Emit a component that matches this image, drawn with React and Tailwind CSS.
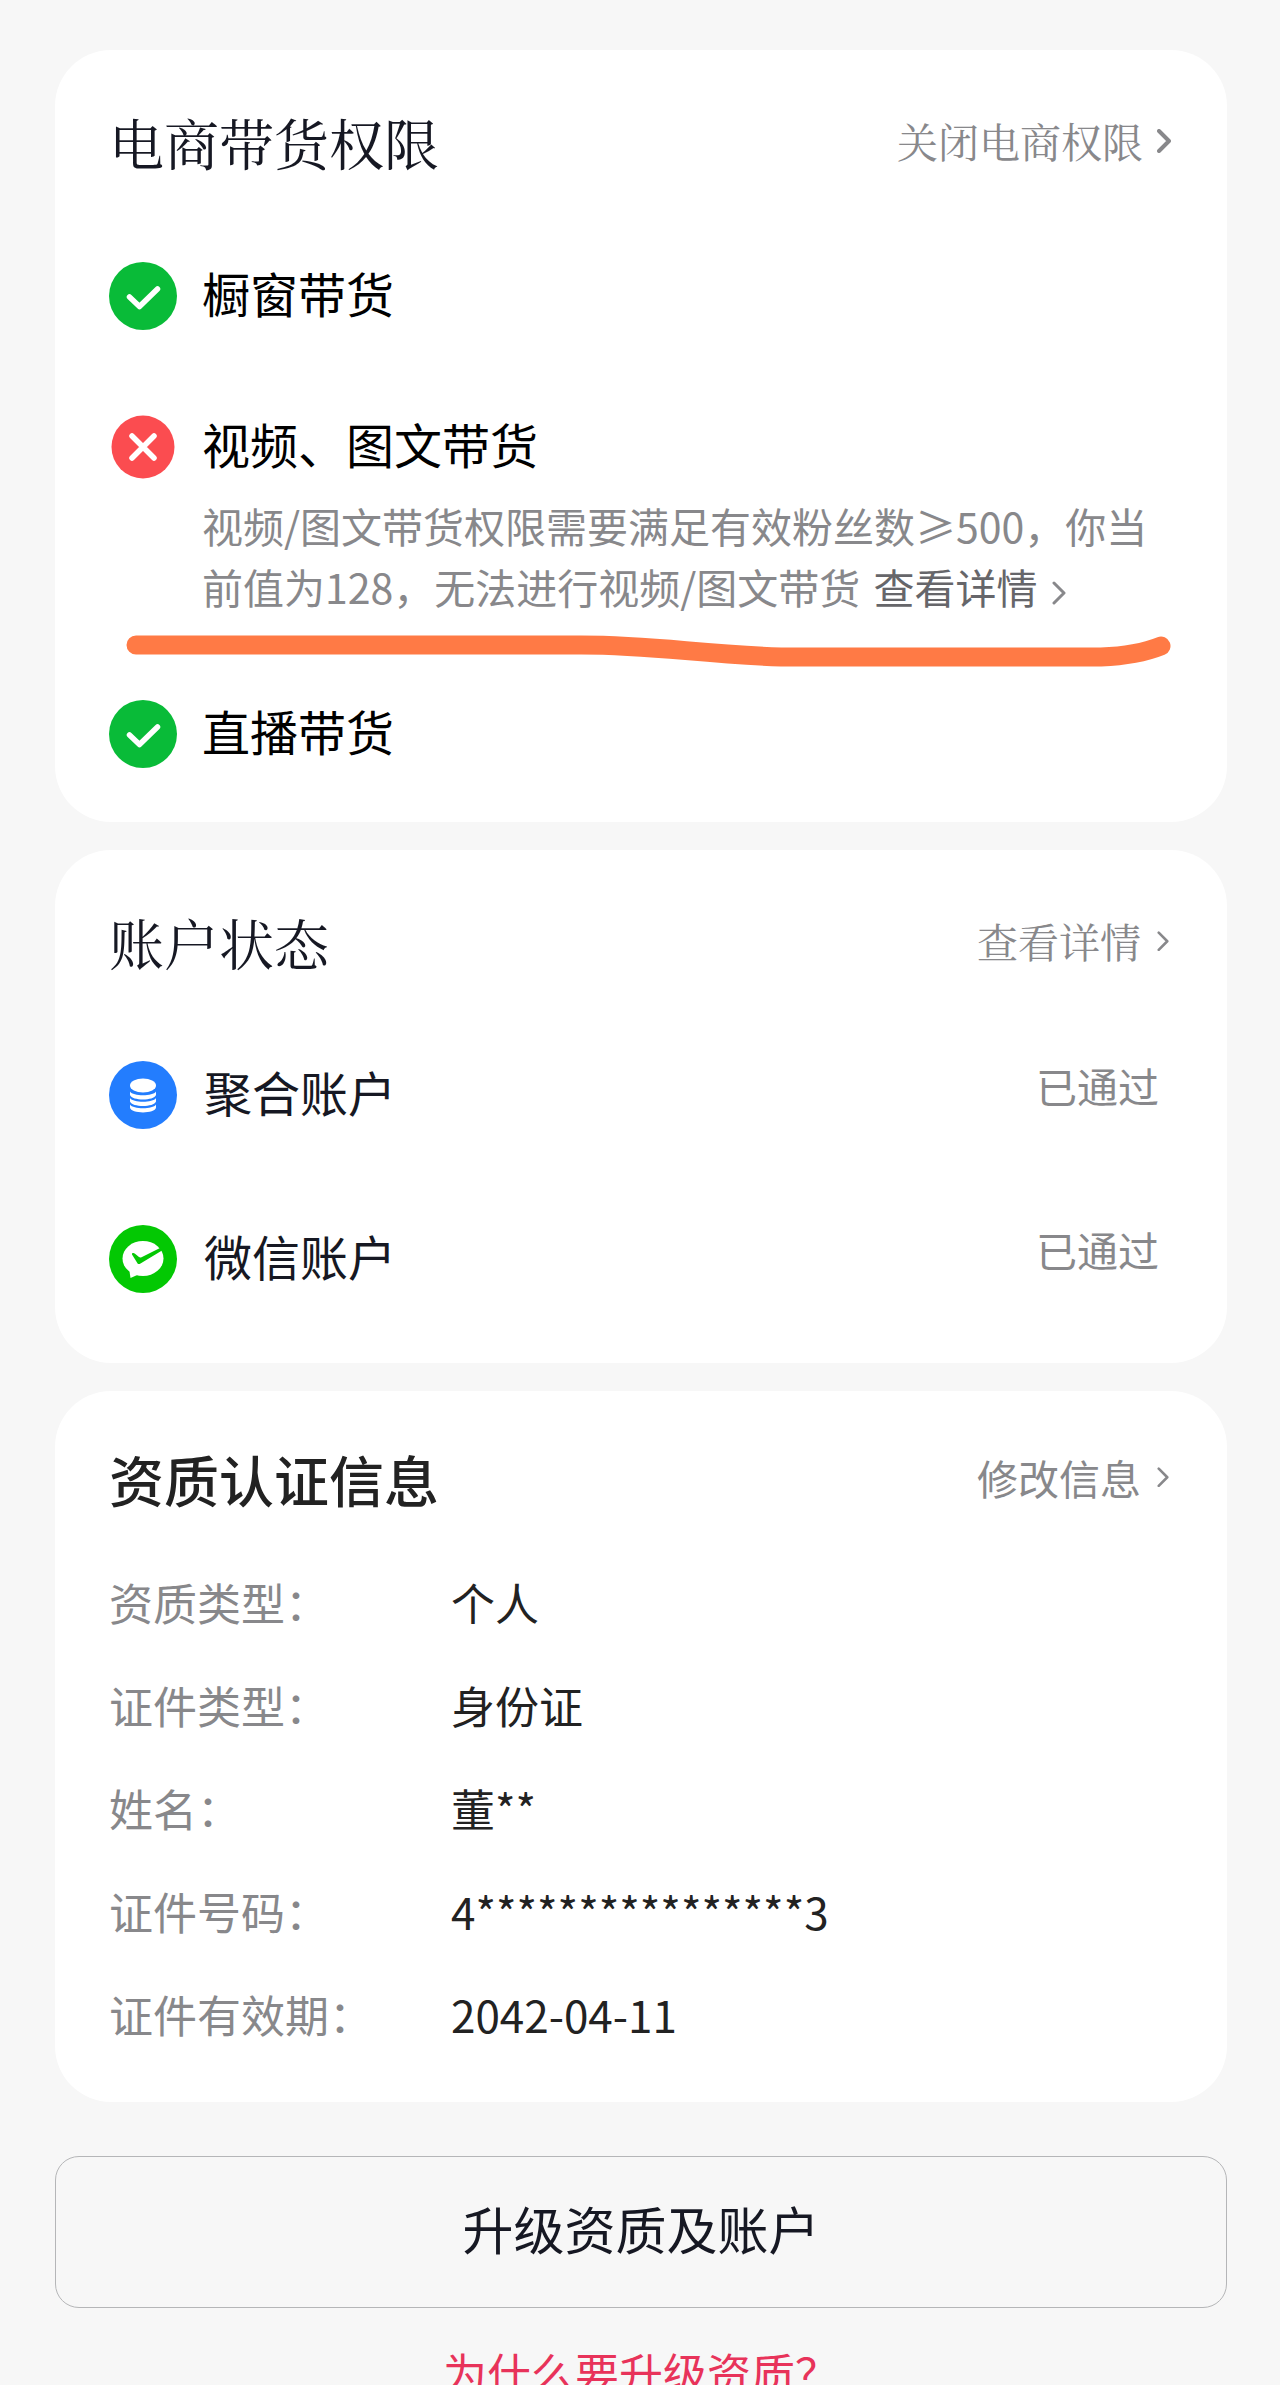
const infoList = [
  { label: "资质类型：", value: "个人" },
  { label: "证件类型：", value: "身份证" },
  { label: "姓名：", value: "董**" },
  { label: "证件号码：", value: "4****************3" },
  { label: "证件有效期：", value: "2042-04-11" },
];

const serif = "font-['Noto_Serif_CJK_SC','Noto_Serif_SC','Source_Han_Serif_SC',serif]";

const Arrow = ({ className, strokeWidth = 3 }) => (
  <svg
    viewBox="0 0 14 24"
    fill="none"
    stroke="currentColor"
    strokeWidth={strokeWidth}
    strokeLinecap="round"
    strokeLinejoin="round"
    className={className}
    aria-hidden="true"
  >
    <path d="M2 2l10 10L2 22" />
  </svg>
);

const PassIcon = () => (
  <svg viewBox="0 0 68 68" fill="none" className="size-[68px] shrink-0" aria-hidden="true">
    <circle cx="34" cy="34" r="34" fill="#09bb38" />
    <path
      d="M20.500 35L30.500 44.500L48.500 27"
      stroke="#fff"
      strokeWidth="5.500"
      strokeLinecap="round"
      strokeLinejoin="round"
    />
  </svg>
);

const FailIcon = () => (
  <svg viewBox="0 0 68 68" fill="none" className="size-[68px] shrink-0" aria-hidden="true">
    <circle cx="34" cy="34" r="31.500" fill="#fb4c50" />
    <path d="M23 23l22 22M45 23L23 45" stroke="#fff" strokeWidth="5.500" strokeLinecap="round" />
  </svg>
);

const CoinsIcon = () => (
  <svg viewBox="0 0 68 68" fill="none" className="size-[68px] shrink-0" aria-hidden="true">
    <circle cx="34" cy="34" r="34" fill="#237dfe" />
    <ellipse cx="34" cy="24.500" rx="13" ry="7" fill="#fff" />
    <path d="M21 30.500c3 5 23 5 26 0v3.500c-2 6-24 6-26 0z" fill="#fff" />
    <path d="M21 37c3 5 23 5 26 0v3.500c-2 6-24 6-26 0z" fill="#fff" />
    <path d="M21 43.500c3 5 23 5 26 0v3c-1 6.500-25 6.500-26 0z" fill="#fff" />
  </svg>
);

const WechatPayIcon = () => (
  <svg viewBox="0 0 68 68" fill="none" className="size-[68px] shrink-0" aria-hidden="true">
    <circle cx="34" cy="34" r="34" fill="#03c803" />
    <ellipse cx="34" cy="33.500" rx="20.500" ry="17.500" fill="#fff" />
    <path d="M20 43l1.500 10 9-4z" fill="#fff" />
    <path
      d="M23 28.500c1-.8 2-.6 3 .2l4 3.300c.8.600 1.500.6 2.500.2L51 23l2 2.500L31.500 38.500c-1.500 1-2.700.7-3.500-1l-5-8z"
      fill="#03c803"
    />
  </svg>
);

const CardHeader = ({ title, action, titleClass, actionClass, arrow }) => (
  <div className="flex items-center justify-between">
    <h2 className={`text-[55px] leading-[64px] ${titleClass}`}>{title}</h2>
    <a
      href="#"
      className={`flex items-center pb-0.5 text-[41px] leading-[56px] text-[#88888b] ${actionClass}`}
    >
      {action}
      {arrow}
    </a>
  </div>
);

const Permission = ({ icon, name }) => (
  <div className="flex items-center gap-[25px]">
    {icon}
    <h3 className="pb-2 text-[48px] leading-[60px] text-black">{name}</h3>
  </div>
);

const Account = ({ icon, name, status }) => (
  <li className="flex items-center gap-[27px]">
    {icon}
    <span className="pb-2 text-[48px] leading-[60px]">{name}</span>
    <span className="ml-auto mr-3.5 self-start text-[41px] leading-[48px] text-[#88888b]">
      {status}
    </span>
  </li>
);

const App = () => {
  return (
    <main
      lang="zh-CN"
      className="min-h-screen bg-[#f7f7f7] pl-[55px] pr-[53px] pt-[50px] font-['Noto_Sans_CJK_SC',sans-serif] text-[#161823]"
    >
      <div className="flex flex-col gap-7">
        <section className="rounded-[56px] bg-white px-[54px] pb-[54px] pt-[60px]">
          <CardHeader
            title="电商带货权限"
            action="关闭电商权限"
            titleClass={`font-normal ${serif}`}
            actionClass={serif}
            arrow={<Arrow className="ml-3.5 mr-0.5 w-3.5" strokeWidth={4} />}
          />
          <div className="mt-[88px]">
            <Permission icon={<PassIcon />} name="橱窗带货" />
          </div>
          <div className="mt-[83px]">
            <Permission icon={<FailIcon />} name="视频、图文带货" />
            <p className="ml-[93px] mt-[14px] text-[41px] leading-[61px] text-[#88888b]">
              视频/图文带货权限需要满足有效粉丝数≥500，你当前值为128，无法进行视频/图文带货{" "}
              <a href="#" className="ml-1 inline-block text-[#66666a]">
                查看详情
                <Arrow className="ml-3.5 inline-block w-3.5 text-[#88888b]" />
              </a>
            </p>
          </div>
          {/* marker line */}
          <svg
            viewBox="0 0 1046 34"
            fill="none"
            className="ml-[17px] mt-[18px] block h-auto w-[calc(100%-18px)]"
            aria-hidden="true"
          >
            <path
              d="M10 10H455C530 10 570 19 655 22H975C1000 21 1020 17 1035 11"
              stroke="#ff7a45"
              strokeWidth="19"
              strokeLinecap="round"
              strokeLinejoin="round"
            />
          </svg>
          <div className="mt-[31px]">
            <Permission icon={<PassIcon />} name="直播带货" />
          </div>
        </section>

        <section className="rounded-[56px] bg-white px-[54px] pb-[70px] pt-[60px]">
          <CardHeader
            title="账户状态"
            action="查看详情"
            titleClass={`font-normal ${serif}`}
            actionClass={serif}
            arrow={<Arrow className="ml-4 mr-1 w-3" />}
          />
          <ul className="mt-[87px] flex flex-col gap-24">
            <Account icon={<CoinsIcon />} name="聚合账户" status="已通过" />
            <Account icon={<WechatPayIcon />} name="微信账户" status="已通过" />
          </ul>
        </section>

        <section className="rounded-[56px] bg-white px-[54px] pb-[56px] pt-[55px]">
          <CardHeader
            title="资质认证信息"
            action="修改信息"
            titleClass="font-medium text-[#222]"
            actionClass=""
            arrow={<Arrow className="ml-4 mr-1 w-3" />}
          />
          <dl className="mt-[60px] flex flex-col gap-[39px] text-[44px] leading-[64px]">
            {infoList.map((item) => (
              <div key={item.label} className="flex">
                <dt className="w-[342px] text-[#88888b]">{item.label}</dt>
                <dd className="text-[#222]">{item.value}</dd>
              </div>
            ))}
          </dl>
        </section>
      </div>

      <button
        type="button"
        className="mt-[54px] block h-[152px] w-full rounded-3xl border border-[#b5b6b8] pb-2 text-[51px]"
      >
        升级资质及账户
      </button>
      <a
        href="#"
        className="mt-[34px] block text-center text-[44px] leading-[60px] text-[#e8335a]"
      >
        为什么要升级资质？
      </a>
    </main>
  );
};

export default App;
